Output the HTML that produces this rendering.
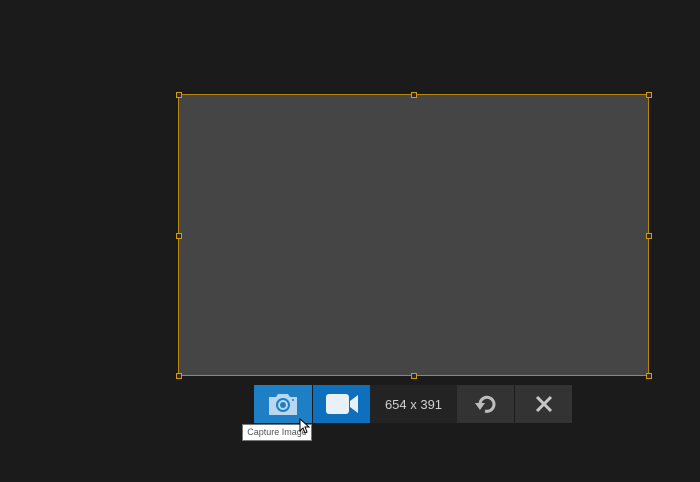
<!DOCTYPE html>
<html><head><style>
body{margin:0;width:700px;height:482px;background:#1b1b1b;position:relative;overflow:hidden;font-family:"Liberation Sans",sans-serif}
.sel{position:absolute;left:178px;top:94px;width:469px;height:280px;border:1px solid #b8860b;background:#454545}
.h{position:absolute;width:4px;height:4px;border:1px solid #d49a10;background:#2a2a2a}
.tb{position:absolute;top:385px;height:38px;display:flex;align-items:center;justify-content:center}
</style></head><body>
<div class="sel"></div>
<div class="h" style="left:176px;top:92px"></div>
<div class="h" style="left:411px;top:92px"></div>
<div class="h" style="left:646px;top:92px"></div>
<div class="h" style="left:176px;top:233px"></div>
<div class="h" style="left:646px;top:233px"></div>
<div class="h" style="left:176px;top:373px"></div>
<div class="h" style="left:411px;top:373px"></div>
<div class="h" style="left:646px;top:373px"></div>

<div class="tb" style="left:254px;width:58px;background:#1f7fc4">
<svg width="32" height="24" viewBox="0 0 32 24"><path d="M2 5h7l2-3h10l2 3h7v18H2z" fill="#b9d8ef"/><circle cx="16" cy="13" r="7" fill="#1f7fc4"/><circle cx="16" cy="13" r="5" fill="#b9d8ef"/><circle cx="16" cy="13" r="3" fill="#1f7fc4"/><circle cx="26" cy="8" r="1" fill="#1f7fc4"/></svg>
</div>
<div class="tb" style="left:313px;width:57px;background:#0e6fbd">
<svg width="34" height="22" viewBox="0 0 34 22"><rect x="1" y="1" width="23" height="20" rx="3" fill="#e9f1f8"/><path d="M25 8l8-6v18l-8-6z" fill="#e9f1f8"/></svg>
</div>
<div class="tb" style="left:370px;width:87px;background:#232323;color:#d0d0d0;font-size:13px">654 x 391</div>
<div class="tb" style="left:457px;width:57px;background:#333">
<svg width="22" height="22" viewBox="0 0 22 22"><path d="M5 11a7 7 0 1 1 5 7" fill="none" stroke="#bdbdbd" stroke-width="3"/><path d="M0 10h10l-5 7z" fill="#bdbdbd"/></svg>
</div>
<div class="tb" style="left:515px;width:57px;background:#333">
<svg width="20" height="20" viewBox="0 0 20 20"><path d="M3 3l14 14M17 3L3 17" stroke="#c8c8c8" stroke-width="3"/></svg>
</div>
<div style="position:absolute;left:242px;top:424px;width:68px;height:15px;background:#fff;border:1px solid #767676;font-size:9px;color:#555;line-height:15px;text-align:center">Capture Image</div>
<svg style="position:absolute;left:299px;top:418px" width="12" height="16" viewBox="0 0 12 16"><path d="M1 1v12l3-3 2 5 2-1-2-5h4z" fill="#fff" stroke="#000" stroke-width="1"/></svg>
</body></html>
